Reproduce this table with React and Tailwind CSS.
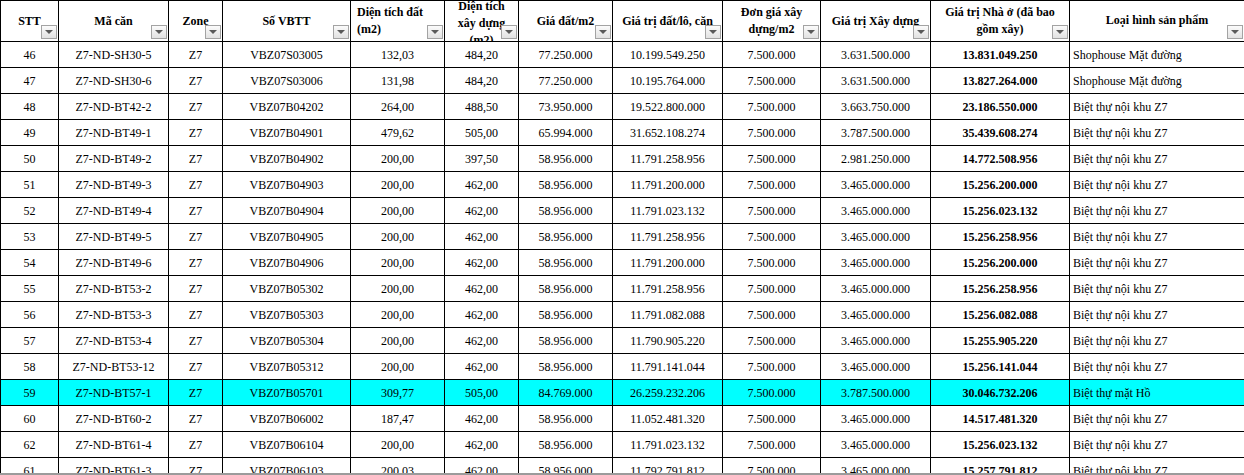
import React from "react";

const COLS =
  "grid grid-cols-[58px_110px_54px_128px_94px_74px_94px_110px_98px_110px_139px_175px]";

const rows = [
  ["46", "Z7-ND-SH30-5", "Z7", "VBZ07S03005", "132,03", "484,20", "77.250.000", "10.199.549.250", "7.500.000", "3.631.500.000", "13.831.049.250", "Shophouse Mặt đường"],
  ["47", "Z7-ND-SH30-6", "Z7", "VBZ07S03006", "131,98", "484,20", "77.250.000", "10.195.764.000", "7.500.000", "3.631.500.000", "13.827.264.000", "Shophouse Mặt đường"],
  ["48", "Z7-ND-BT42-2", "Z7", "VBZ07B04202", "264,00", "488,50", "73.950.000", "19.522.800.000", "7.500.000", "3.663.750.000", "23.186.550.000", "Biệt thự nội khu Z7"],
  ["49", "Z7-ND-BT49-1", "Z7", "VBZ07B04901", "479,62", "505,00", "65.994.000", "31.652.108.274", "7.500.000", "3.787.500.000", "35.439.608.274", "Biệt thự nội khu Z7"],
  ["50", "Z7-ND-BT49-2", "Z7", "VBZ07B04902", "200,00", "397,50", "58.956.000", "11.791.258.956", "7.500.000", "2.981.250.000", "14.772.508.956", "Biệt thự nội khu Z7"],
  ["51", "Z7-ND-BT49-3", "Z7", "VBZ07B04903", "200,00", "462,00", "58.956.000", "11.791.200.000", "7.500.000", "3.465.000.000", "15.256.200.000", "Biệt thự nội khu Z7"],
  ["52", "Z7-ND-BT49-4", "Z7", "VBZ07B04904", "200,00", "462,00", "58.956.000", "11.791.023.132", "7.500.000", "3.465.000.000", "15.256.023.132", "Biệt thự nội khu Z7"],
  ["53", "Z7-ND-BT49-5", "Z7", "VBZ07B04905", "200,00", "462,00", "58.956.000", "11.791.258.956", "7.500.000", "3.465.000.000", "15.256.258.956", "Biệt thự nội khu Z7"],
  ["54", "Z7-ND-BT49-6", "Z7", "VBZ07B04906", "200,00", "462,00", "58.956.000", "11.791.200.000", "7.500.000", "3.465.000.000", "15.256.200.000", "Biệt thự nội khu Z7"],
  ["55", "Z7-ND-BT53-2", "Z7", "VBZ07B05302", "200,00", "462,00", "58.956.000", "11.791.258.956", "7.500.000", "3.465.000.000", "15.256.258.956", "Biệt thự nội khu Z7"],
  ["56", "Z7-ND-BT53-3", "Z7", "VBZ07B05303", "200,00", "462,00", "58.956.000", "11.791.082.088", "7.500.000", "3.465.000.000", "15.256.082.088", "Biệt thự nội khu Z7"],
  ["57", "Z7-ND-BT53-4", "Z7", "VBZ07B05304", "200,00", "462,00", "58.956.000", "11.790.905.220", "7.500.000", "3.465.000.000", "15.255.905.220", "Biệt thự nội khu Z7"],
  ["58", "Z7-ND-BT53-12", "Z7", "VBZ07B05312", "200,00", "462,00", "58.956.000", "11.791.141.044", "7.500.000", "3.465.000.000", "15.256.141.044", "Biệt thự nội khu Z7"],
  ["59", "Z7-ND-BT57-1", "Z7", "VBZ07B05701", "309,77", "505,00", "84.769.000", "26.259.232.206", "7.500.000", "3.787.500.000", "30.046.732.206", "Biệt thự mặt Hồ", true],
  ["60", "Z7-ND-BT60-2", "Z7", "VBZ07B06002", "187,47", "462,00", "58.956.000", "11.052.481.320", "7.500.000", "3.465.000.000", "14.517.481.320", "Biệt thự nội khu Z7"],
  ["62", "Z7-ND-BT61-4", "Z7", "VBZ07B06104", "200,00", "462,00", "58.956.000", "11.791.023.132", "7.500.000", "3.465.000.000", "15.256.023.132", "Biệt thự nội khu Z7"],
  ["61", "Z7-ND-BT61-3", "Z7", "VBZ07B06103", "200,03", "462,00", "58.956.000", "11.792.791.812", "7.500.000", "3.465.000.000", "15.257.791.812", "Biệt thự nội khu Z7"],
];

function Filter() {
  return (
    <span className="absolute right-[1px] bottom-[2px] z-10 flex h-[14px] w-[16px] items-center justify-center border border-[#a3a3a3] bg-linear-to-b from-[#fbfbfb] to-[#e2e2e2]">
      <span className="h-0 w-0 border-l-[4px] border-r-[4px] border-t-[4px] border-l-transparent border-r-transparent border-t-[#5a5a5a]" />
    </span>
  );
}

function HeadCell({ children, className = "" }) {
  return (
    <div
      className={
        "relative flex items-center overflow-hidden border-l border-t border-black text-center font-bold leading-[17px] " +
        className
      }
    >
      {children}
      <Filter />
    </div>
  );
}

export default function App() {
  return (
    <div className="flex h-[475px] w-[1244px] flex-col overflow-hidden bg-white font-['Liberation_Serif','Times_New_Roman',serif] text-[12px] text-black">
      <div className="flex-1 overflow-hidden">
        <div className={COLS + " h-[41px]"}>
          <HeadCell className="justify-center">
            <span className="w-full">STT</span>
          </HeadCell>
          <HeadCell className="justify-center">
            <span className="w-full">Mã căn</span>
          </HeadCell>
          <HeadCell className="justify-center">
            <span className="w-full">Zone</span>
          </HeadCell>
          <HeadCell className="justify-center">
            <span className="w-full">Số VBTT</span>
          </HeadCell>
          <HeadCell className="justify-start pl-[6px] text-left">
            <span>
              Diện tích đất
              <br />
              (m2)
            </span>
          </HeadCell>
          <HeadCell className="justify-center pt-[4px] leading-[15px]">
            <span className="w-full">
              Diện tích
              <br />
              xây dựng
              <br />
              (m2)
            </span>
          </HeadCell>
          <HeadCell className="justify-center">
            <span className="w-full">Giá đất/m2</span>
          </HeadCell>
          <HeadCell className="justify-center">
            <span className="w-full whitespace-nowrap">Giá trị đất/lô, căn</span>
          </HeadCell>
          <HeadCell className="justify-center">
            <span className="w-full">
              Đơn giá xây
              <br />
              dựng/m2
            </span>
          </HeadCell>
          <HeadCell className="justify-center">
            <span className="w-full whitespace-nowrap">Giá trị Xây dựng</span>
          </HeadCell>
          <HeadCell className="justify-center">
            <span className="w-full">
              Giá trị Nhà ở (đã bao
              <br />
              gồm xây)
            </span>
          </HeadCell>
          <HeadCell className="justify-center pb-[2px]">
            <span className="w-full">Loại hình sản phẩm</span>
          </HeadCell>
        </div>

        {rows.map((r) => {
          const hl = r[12] === true;
          return (
            <div
              key={r[0] + r[1]}
              className={COLS + " h-[26px] " + (hl ? "bg-[#00ffff]" : "bg-white")}
            >
              {r.slice(0, 12).map((v, i) => (
                <div
                  key={i}
                  className={
                    "flex items-center overflow-hidden whitespace-nowrap border-l border-t border-black " +
                    (i === 11 ? "justify-start pl-[3px]" : "justify-center") +
                    (i === 10 ? " font-bold" : "")
                  }
                >
                  {v}
                </div>
              ))}
            </div>
          );
        })}
      </div>
      <div className="h-[2px] bg-[#9b9b9b]" />
    </div>
  );
}
